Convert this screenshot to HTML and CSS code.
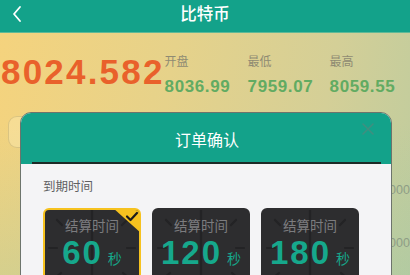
FILE: index.html
```html
<!DOCTYPE html>
<html lang="zh-CN">
<head>
<meta charset="utf-8">
<title>比特币</title>
<link rel="stylesheet" href="styles.css">
</head>
<body>
<div class="page">
  <header class="topbar">
    <svg class="back" width="12" height="18" viewBox="0 0 12 18"><path d="M9 2 L3 9 L9 16" fill="none" stroke="#fff" stroke-width="1.8" stroke-linecap="round" stroke-linejoin="round"/></svg>
    <h1 class="title">比特币</h1>
  </header>

  <section class="quote">
    <div class="price">8024.582</div>
    <div class="stats">
      <div class="stat"><span class="stat-label">开盘</span><span class="stat-value">8036.99</span></div>
      <div class="stat"><span class="stat-label">最低</span><span class="stat-value">7959.07</span></div>
      <div class="stat"><span class="stat-label">最高</span><span class="stat-value">8059.55</span></div>
    </div>
  </section>

  <div class="input-row"><div class="input-box"></div></div>

  <div class="list">
    <div class="list-row">000</div>
    <div class="list-row">000</div>
  </div>

  <div class="modal">
    <div class="modal-head">
      <span class="modal-title">订单确认</span>
      <svg class="close" width="14" height="14" viewBox="0 0 14 14"><path d="M2 2 L12 12 M12 2 L2 12" stroke="#3f8f80" stroke-width="1.6" stroke-linecap="round"/></svg>
    </div>
    <div class="modal-body">
      <div class="section-label">到期时间</div>
      <div class="cards">
        <div class="card selected">
          <svg class="clock" viewBox="0 0 98 90"><g stroke="#232325" stroke-width="2.2" stroke-linecap="round"><line x1="49" y1="2" x2="49" y2="80"/><line x1="6" y1="40" x2="14" y2="40"/><line x1="84" y1="40" x2="92" y2="40"/><line x1="14" y1="12" x2="19" y2="17"/><line x1="84" y1="12" x2="79" y2="17"/><line x1="12" y1="70" x2="18" y2="65"/><line x1="86" y1="70" x2="80" y2="65"/></g></svg>
          <div class="corner"><svg width="14" height="11" viewBox="0 0 14 11"><path d="M2 5.5 L5.5 9 L12 2" fill="none" stroke="#1c1c1c" stroke-width="2.2" stroke-linecap="round" stroke-linejoin="round"/></svg></div>
          <div class="card-label">结算时间</div>
          <div class="card-value"><span class="num">60</span><span class="unit">秒</span></div>
        </div>
        <div class="card">
          <svg class="clock" viewBox="0 0 98 90"><g stroke="#232325" stroke-width="2.2" stroke-linecap="round"><line x1="49" y1="2" x2="49" y2="80"/><line x1="6" y1="40" x2="14" y2="40"/><line x1="84" y1="40" x2="92" y2="40"/><line x1="14" y1="12" x2="19" y2="17"/><line x1="84" y1="12" x2="79" y2="17"/><line x1="12" y1="70" x2="18" y2="65"/><line x1="86" y1="70" x2="80" y2="65"/></g></svg>
          <div class="card-label">结算时间</div>
          <div class="card-value"><span class="num">120</span><span class="unit">秒</span></div>
        </div>
        <div class="card">
          <svg class="clock" viewBox="0 0 98 90"><g stroke="#232325" stroke-width="2.2" stroke-linecap="round"><line x1="49" y1="2" x2="49" y2="80"/><line x1="6" y1="40" x2="14" y2="40"/><line x1="84" y1="40" x2="92" y2="40"/><line x1="14" y1="12" x2="19" y2="17"/><line x1="84" y1="12" x2="79" y2="17"/><line x1="12" y1="70" x2="18" y2="65"/><line x1="86" y1="70" x2="80" y2="65"/></g></svg>
          <div class="card-label">结算时间</div>
          <div class="card-value"><span class="num">180</span><span class="unit">秒</span></div>
        </div>
      </div>
    </div>
  </div>
</div>
</body>
</html>
```

FILE: styles.css
```css
* { box-sizing: border-box; margin: 0; padding: 0; }
html, body { width: 410px; height: 275px; overflow: hidden; }
body {
  font-family: "Noto Sans CJK SC", "Noto Sans", sans-serif;
}
.page {
  position: relative;
  width: 410px;
  height: 275px;
  overflow: hidden;
  background:
    linear-gradient(180deg, rgba(150, 200, 170, 0) 45%, rgba(150, 200, 170, 0.3) 100%),
    linear-gradient(100deg, #f5d37d 0%, #e6d28a 40%, #d4cf97 75%, #bfcc9e 100%);
}
.topbar {
  position: relative;
  height: 33px;
  background: #13a28a;
  border-bottom: 1px solid #5fb997;
  display: flex;
  align-items: center;
  justify-content: center;
}
.back { position: absolute; left: 11px; top: 5px; }
.title {
  font-size: 16.5px;
  font-weight: 500;
  color: #fff;
  line-height: 20px;
  margin-top: -6px;
}
.quote {
  display: flex;
  align-items: flex-start;
  padding-top: 21px;
}
.price {
  font-family: "Liberation Sans", Arial, sans-serif;
  font-weight: bold;
  font-size: 35px;
  line-height: 34px;
  letter-spacing: 2.2px;
  color: #e9612b;
  margin-left: 1px;
  margin-top: 1px;
  width: 164px;
  white-space: nowrap;
}
.stats {
  display: grid;
  grid-template-columns: 83px 82px 82px;
}
.stat { display: flex; flex-direction: column; }
.stat-label {
  font-size: 12px;
  line-height: 14px;
  color: #8f8b73;
}
.stat-value {
  font-family: "Liberation Sans", Arial, sans-serif;
  font-weight: bold;
  font-size: 17px;
  line-height: 20px;
  letter-spacing: 0.6px;
  color: #62ab62;
  margin-top: 9px;
}
.input-row { padding: 19px 0 0 8px; }
.input-box {
  width: 120px;
  height: 32px;
  border-radius: 9px;
  border: 1px solid rgba(190, 170, 110, 0.5);
  background: rgba(255, 240, 190, 0.35);
}
.list { padding-top: 34px; }
.list-row {
  height: 53px;
  padding-left: 389px;
  font-family: "Liberation Sans", Arial, sans-serif;
  font-size: 12.5px;
  line-height: 16px;
  color: #8e9d86;
  white-space: nowrap;
}
.modal {
  position: absolute;
  left: 20px;
  top: 112px;
  width: 372px;
  height: 200px;
  border-radius: 11px 11px 0 0;
  background: #f4f4f6;
  border: 1px solid #6d746c;
  overflow: hidden;
}
.modal-head {
  position: relative;
  height: 51px;
  background: #13a28a;
  display: flex;
  align-items: center;
  justify-content: center;
}
.modal-head::after {
  content: "";
  position: absolute;
  left: 11px;
  right: 10px;
  bottom: 0;
  height: 2px;
  background: #1d2a27;
}
.modal-title {
  font-size: 16px;
  line-height: 20px;
  color: #fff;
  margin-left: 2px;
}
.close { position: absolute; right: 16px; top: 9px; }
.modal-body { padding: 13px 0 0 22px; }
.section-label {
  font-size: 12.5px;
  line-height: 18px;
  color: #5f5f62;
}
.cards {
  display: flex;
  gap: 11px;
  margin-top: 13px;
}
.card {
  position: relative;
  width: 98px;
  height: 90px;
  border-radius: 6px;
  background: #2d2d2f;
  border: 2px solid #2d2d2f;
  display: flex;
  flex-direction: column;
  align-items: center;
  overflow: hidden;
}
.card.selected { border-color: #f6c21f; }
.clock { position: absolute; left: -2px; top: -2px; width: 98px; height: 90px; }
.corner {
  position: absolute;
  top: -2px;
  right: -2px;
  width: 28px;
  height: 25px;
  background: #f6c21f;
  clip-path: polygon(0 0, 100% 0, 100% 100%);
}
.corner svg { position: absolute; right: 2px; top: 3px; }
.card-label {
  position: relative;
  font-size: 13.5px;
  line-height: 20px;
  color: #7c7c7f;
  margin-top: 5px;
}
.card-value {
  position: relative;
  display: flex;
  align-items: baseline;
  color: #16a88c;
  margin-top: 0;
}
.num {
  font-family: "Liberation Sans", Arial, sans-serif;
  font-weight: bold;
  font-size: 33px;
  line-height: 36px;
  letter-spacing: 2px;
}
.unit {
  font-size: 14px;
  margin-left: 5px;
}
```
